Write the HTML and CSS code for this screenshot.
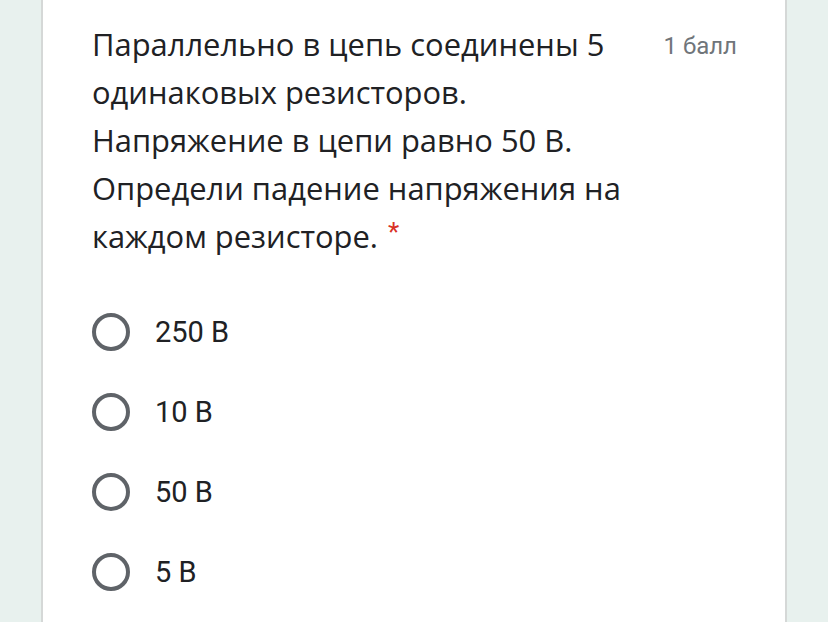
FILE: index.html
```html
<!DOCTYPE html>
<html lang="ru">
<head>
<meta charset="utf-8">
<link rel="stylesheet" href="styles.css">
</head>
<body>
<div class="card">
  <div class="head">
    <div class="question">Параллельно в цепь соединены 5 одинаковых резисторов. Напряжение в цепи равно 50 В. Определи падение напряжения на каждом резисторе. <span class="req">*</span></div>
    <div class="points">1 балл</div>
  </div>
  <div class="options">
    <div class="option"><span class="radio"></span><span class="label">250 В</span></div>
    <div class="option"><span class="radio"></span><span class="label">10 В</span></div>
    <div class="option"><span class="radio"></span><span class="label">50 В</span></div>
    <div class="option"><span class="radio"></span><span class="label">5 В</span></div>
  </div>
</div>
</body>
</html>
```

FILE: styles.css
```css
html, body {
  margin: 0;
  padding: 0;
  height: 100%;
  overflow: hidden;
}
body {
  background: #e8f1ee;
}
.card {
  margin: 0 41px;
  height: 100%;
  background: #fff;
  border-left: 2px solid #d5d8d7;
  border-right: 2px solid #d5d8d7;
  box-sizing: border-box;
  padding: 20px 48px 0 49px;
}
.head {
  display: flex;
  align-items: flex-start;
}
.question {
  width: 540px;
  font-family: "Open Sans", sans-serif;
  font-size: 30.9px;
  line-height: 48px;
  color: #202124;
}
.req {
  color: #d93025;
  font-family: Roboto, sans-serif;
  font-size: 26px;
  vertical-align: top;
  line-height: 40px;
  margin-left: 2px;
}
.points {
  margin-left: auto;
  margin-top: 12px;
  font-family: Roboto, sans-serif;
  font-size: 24px;
  color: #70757a;
}
.options {
  margin-top: 52px;
  display: flex;
  flex-direction: column;
  gap: 40px;
}
.option {
  display: flex;
  align-items: center;
  gap: 25px;
  height: 40px;
}
.radio {
  width: 30px;
  height: 30px;
  border: 4px solid #5f6368;
  border-radius: 50%;
  box-sizing: content-box;
  flex: none;
}
.label {
  font-family: Roboto, sans-serif;
  font-size: 29px;
  color: #202124;
}
```
